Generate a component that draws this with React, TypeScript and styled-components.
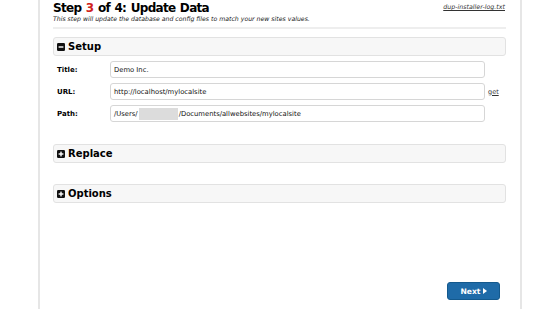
import React from 'react';
import styled, { createGlobalStyle } from 'styled-components';

const GlobalStyle = createGlobalStyle`
  html, body {
    margin: 0;
    padding: 0;
    background: #fff;
    font-family: "DejaVu Sans", Verdana, sans-serif;
    color: #000;
  }
`;

const Page = styled.div`
  margin-left: 38px;
  width: 484px;
  min-height: 309px;
  box-sizing: border-box;
  border-left: 2px solid #e6e6e6;
  border-right: 2px solid #e6e6e6;
  padding: 0 14px 0 13px;
  display: flex;
  flex-direction: column;
`;

const Header = styled.div`
  display: flex;
  justify-content: space-between;
  align-items: flex-start;
  border-bottom: 2px solid #eeeeee;
  padding: 1px 0 4px;
`;

const HeaderText = styled.div`
  display: flex;
  flex-direction: column;
`;

const Title = styled.h1`
  margin: 0;
  font-size: 12px;
  line-height: 14px;
  font-weight: bold;
  letter-spacing: -0.7px;
  word-spacing: 1px;
`;

const StepNum = styled.span`
  color: #d0211c;
`;

const Subtitle = styled.div`
  font-size: 6.2px;
  font-style: italic;
  line-height: 8px;
  color: #222;
`;

const LogLink = styled.a`
  font-size: 6.3px;
  font-style: italic;
  color: #333;
  text-decoration: underline;
  margin-top: 2px;
  margin-right: 1px;
`;

const SectionHeader = styled.div<{ $top: number }>`
  margin-top: ${p => p.$top}px;
  height: 19px;
  box-sizing: border-box;
  border: 1px solid #e2e2e2;
  border-radius: 3px;
  background: #f7f7f7;
  display: flex;
  align-items: center;
  padding-left: 3px;
  gap: 3px;
  font-weight: bold;
  font-size: 10px;
`;

const Rows = styled.div`
  display: flex;
  flex-direction: column;
  gap: 5px;
  margin-top: 5px;
`;

const Row = styled.div`
  display: flex;
  align-items: center;
  height: 17px;
`;

const Label = styled.div`
  width: 57px;
  padding-left: 4px;
  box-sizing: border-box;
  font-size: 7px;
  font-weight: bold;
`;

const Field = styled.div`
  width: 375px;
  height: 17px;
  box-sizing: border-box;
  border: 1px solid #d6d6d6;
  border-radius: 3px;
  display: flex;
  align-items: center;
  padding-left: 3px;
  font-size: 6.8px;
  color: #111;
`;

const Blur = styled.span`
  display: inline-block;
  width: 39px;
  height: 12px;
  background: #dcdcdc;
  margin: 0 1px;
`;

const GetLink = styled.a`
  font-size: 6.5px;
  color: #333;
  text-decoration: underline;
  margin-left: 3px;
`;

const Footer = styled.div`
  display: flex;
  justify-content: flex-end;
  margin-top: 79px;
  padding-right: 6px;
`;

const NextButton = styled.button`
  width: 53px;
  height: 18px;
  border: 1px solid #14598d;
  border-radius: 3px;
  background: #1f6ba8;
  color: #fff;
  font-family: "DejaVu Sans", Verdana, sans-serif;
  font-size: 7.6px;
  font-weight: bold;
  display: flex;
  align-items: center;
  justify-content: center;
  gap: 2px;
  padding: 0;
`;

const ToggleIcon = ({ open }: { open: boolean }) => (
  <svg width="8" height="8" viewBox="0 0 8 8">
    <rect x="0" y="0" width="8" height="8" rx="1.2" fill="#111" />
    <rect x="1.6" y="3.3" width="4.8" height="1.4" fill="#fff" />
    {!open && <rect x="3.3" y="1.6" width="1.4" height="4.8" fill="#fff" />}
  </svg>
);

const Arrow = () => (
  <svg width="4" height="6" viewBox="0 0 4 6">
    <path d="M0 0 L4 3 L0 6 Z" fill="#fff" />
  </svg>
);

export default function App() {
  return (
    <>
      <GlobalStyle />
      <Page>
        <Header>
          <HeaderText>
            <Title>
              Step <StepNum>3</StepNum> of 4: Update Data
            </Title>
            <Subtitle>This step will update the database and config files to match your new sites values.</Subtitle>
          </HeaderText>
          <LogLink>dup-installer-log.txt</LogLink>
        </Header>

        <SectionHeader $top={8}>
          <ToggleIcon open />
          Setup
        </SectionHeader>
        <Rows>
          <Row>
            <Label>Title:</Label>
            <Field>Demo Inc.</Field>
          </Row>
          <Row>
            <Label>URL:</Label>
            <Field>http://localhost/mylocalsite</Field>
            <GetLink>get</GetLink>
          </Row>
          <Row>
            <Label>Path:</Label>
            <Field>
              /Users/<Blur />/Documents/allwebsites/mylocalsite
            </Field>
          </Row>
        </Rows>

        <SectionHeader $top={22}>
          <ToggleIcon open={false} />
          Replace
        </SectionHeader>
        <SectionHeader $top={21}>
          <ToggleIcon open={false} />
          Options
        </SectionHeader>

        <Footer>
          <NextButton>
            Next <Arrow />
          </NextButton>
        </Footer>
      </Page>
    </>
  );
}
